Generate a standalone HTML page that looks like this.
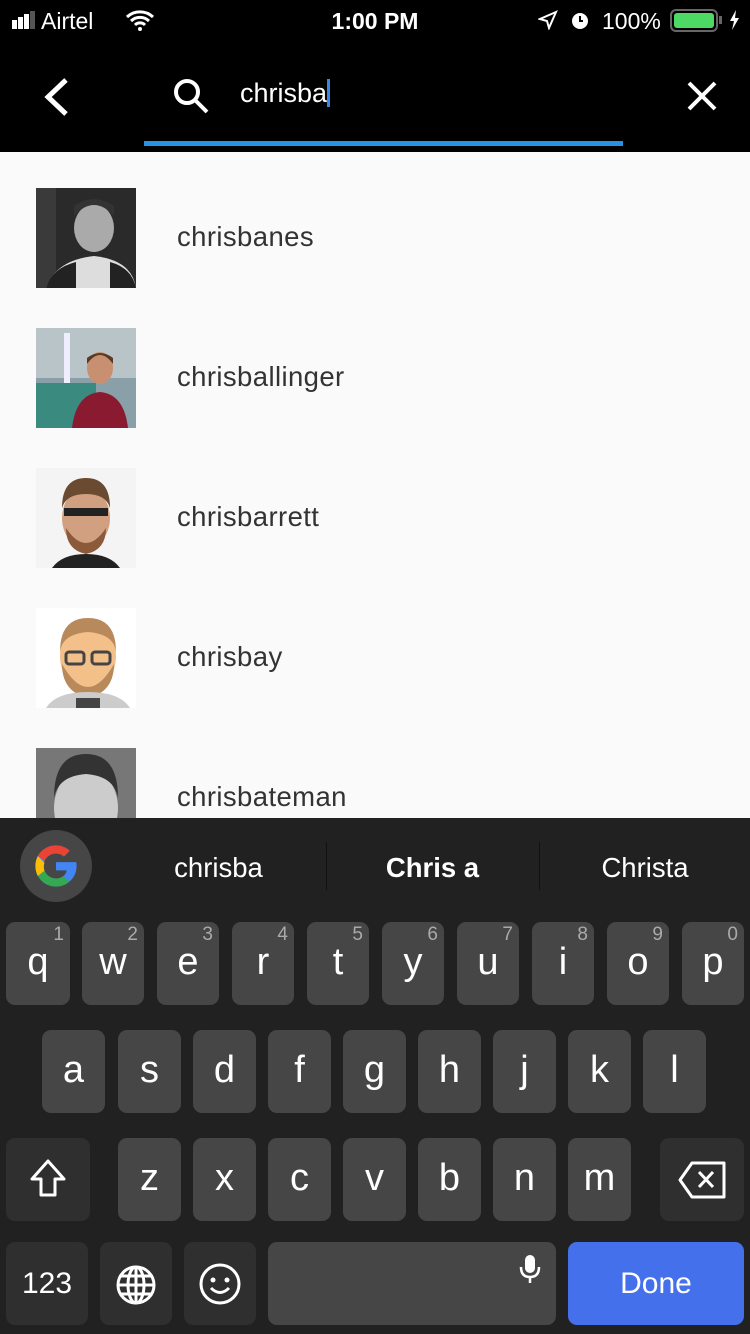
<!DOCTYPE html><html><head><meta charset="utf-8"><style>
*{margin:0;padding:0;box-sizing:border-box}
body{width:750px;height:1334px;overflow:hidden;background:#fafafa;font-family:"Liberation Sans",sans-serif;position:relative}
.abs{position:absolute}
.k{position:absolute;background:#464646;border-radius:9px;color:#fff;font-size:38px;text-align:center;line-height:80px;height:83px}
.k sup{position:absolute;right:6px;top:2px;font-size:19px;color:#aaa;line-height:22px}
.d{background:#2f2f2f}
.row{position:absolute;left:0;width:750px;height:140px}
.row svg{position:absolute;left:36px;top:36px}
.row span{position:absolute;left:177px;top:69px;font-size:27.5px;color:#333;letter-spacing:.4px}
</style></head><body>
<div class="abs" style="left:0;top:0;width:750px;height:152px;background:#000"></div>
<div class="abs" style="left:12px;top:4px;color:#fff;font-size:23px;line-height:34px">
<span style="display:inline-block;width:5px;height:9px;background:#fff;margin-right:1px"></span><span style="display:inline-block;width:5px;height:12px;background:#fff;margin-right:1px"></span><span style="display:inline-block;width:5px;height:15px;background:#fff;margin-right:1px"></span><span style="display:inline-block;width:5px;height:18px;background:#555;margin-right:6px"></span>Airtel</div>
<svg class="abs" style="left:125px;top:9px" width="30" height="22" viewBox="0 0 30 22"><path d="M2 8a19 19 0 0 1 26 0M6 12a13 13 0 0 1 18 0M10 16a7 7 0 0 1 10 0" stroke="#fff" stroke-width="3" fill="none"/><circle cx="15" cy="20" r="2" fill="#fff"/></svg>
<div class="abs" style="left:0;width:750px;top:4px;text-align:center;color:#fff;font-size:23px;font-weight:bold;line-height:34px">1:00 PM</div>
<svg class="abs" style="left:538px;top:10px" width="20" height="20"><path d="M18 2L2 9l7 2 2 7z" stroke="#fff" stroke-width="2" fill="none"/></svg>
<svg class="abs" style="left:569px;top:9px" width="22" height="22"><circle cx="11" cy="12" r="8" fill="#fff"/><path d="M11 7v5h3" stroke="#000" stroke-width="2" fill="none"/></svg>
<div class="abs" style="left:602px;top:4px;color:#fff;font-size:23px;line-height:34px">100%</div>
<div class="abs" style="left:670px;top:9px;width:48px;height:23px;border:2px solid #666;border-radius:6px;padding:2px"><div style="width:100%;height:100%;background:#4cd964;border-radius:3px"></div></div>
<div class="abs" style="left:719px;top:16px;width:3px;height:8px;background:#666"></div>
<svg class="abs" style="left:728px;top:9px" width="12" height="22"><path d="M8 1L2 12h4l-2 9 7-12H7z" fill="#fff"/></svg>
<svg class="abs" style="left:40px;top:76px" width="32" height="42"><path d="M26 4L8 21l18 17" stroke="#fff" stroke-width="5" fill="none"/></svg>
<svg class="abs" style="left:170px;top:76px" width="42" height="40"><circle cx="17" cy="16" r="11" stroke="#fff" stroke-width="4" fill="none"/><path d="M25 24l12 12" stroke="#fff" stroke-width="4"/></svg>
<div class="abs" style="left:240px;top:76px;color:#fff;font-size:27px;line-height:34px">chrisba<span style="display:inline-block;width:3px;height:28px;background:#3a86e8;vertical-align:-5px"></span></div>
<svg class="abs" style="left:686px;top:80px" width="32" height="32"><path d="M3 3l26 26M29 3L3 29" stroke="#fff" stroke-width="4"/></svg>
<div class="abs" style="left:144px;top:141px;width:479px;height:5px;background:#2592e8"></div>

<div class="row" style="top:152px"><svg width="100" height="100"><rect width="100" height="100" fill="#2a2a2a"/><rect x="0" width="20" height="100" fill="#3a3a3a"/><ellipse cx="58" cy="40" rx="20" ry="24" fill="#aaa"/><path d="M38 28q20-22 40 0v-10q-20-14-40 0z" fill="#333"/><path d="M10 100q10-28 48-32q38 4 42 32z" fill="#ddd"/><path d="M10 100q6-20 30-26v26zM100 100q-4-20-26-26v26z" fill="#222"/></svg><span>chrisbanes</span></div>
<div class="row" style="top:292px"><svg width="100" height="100"><rect width="100" height="100" fill="#8aa0a8"/><rect x="0" y="0" width="100" height="50" fill="#b8c4c8"/><rect x="28" y="5" width="6" height="50" fill="#eef"/><rect x="0" y="55" width="60" height="45" fill="#3a8a80"/><ellipse cx="64" cy="40" rx="13" ry="16" fill="#c89070"/><path d="M51 36q13-18 26 0v-6q-13-10-26 0z" fill="#5a3a20"/><path d="M36 100q4-34 28-36q24 2 28 36z" fill="#8a1a30"/></svg><span>chrisballinger</span></div>
<div class="row" style="top:432px"><svg width="100" height="100"><rect width="100" height="100" fill="#f4f4f4"/><ellipse cx="50" cy="50" rx="24" ry="30" fill="#d0a080"/><path d="M26 40q0-30 24-30q24 0 24 30q-4-14-24-14q-20 0-24 14z" fill="#6a4a30"/><path d="M30 60q20 30 40 0q0 22-20 26q-20-4-20-26z" fill="#8a5a3a"/><rect x="28" y="40" width="44" height="8" fill="#222"/><path d="M16 100q10-14 34-14q24 0 34 14z" fill="#222"/></svg><span>chrisbarrett</span></div>
<div class="row" style="top:572px"><svg width="100" height="100"><rect width="100" height="100" fill="#fff"/><ellipse cx="52" cy="48" rx="28" ry="36" fill="#f3c08a"/><path d="M24 44q0-34 28-34q28 0 28 34q-2-18-28-20q-26 2-28 20z" fill="#b8895a"/><path d="M26 56q26 46 52 0q0 28-26 34q-26-6-26-34z" fill="#b8895a"/><rect x="30" y="44" width="18" height="12" rx="3" fill="none" stroke="#444" stroke-width="3"/><rect x="56" y="44" width="18" height="12" rx="3" fill="none" stroke="#444" stroke-width="3"/><path d="M10 100q10-16 42-16q32 0 42 16z" fill="#ccc"/><rect x="40" y="90" width="24" height="10" fill="#444"/></svg><span>chrisbay</span></div>
<div class="row" style="top:712px"><svg width="100" height="70"><rect width="100" height="70" fill="#777"/><ellipse cx="50" cy="60" rx="32" ry="40" fill="#ccc"/><path d="M18 50q0-44 32-44q32 0 32 44q-4-22-32-24q-28 2-32 24z" fill="#333"/></svg><span>chrisbateman</span></div>

<div class="abs" style="left:0;top:818px;width:750px;height:516px;background:#212121"></div>
<div class="abs" style="left:20px;top:830px;width:72px;height:72px;border-radius:50%;background:#464646"></div>
<svg class="abs" style="left:33px;top:843px" width="46" height="46" viewBox="0 0 48 48"><path d="M43.6 20H24v8.5h11.2C34 34 29.6 37 24 37c-7.2 0-13-5.8-13-13s5.8-13 13-13c3.2 0 6 1.1 8.300 3.1l6-6C34.6 4.7 29.6 2.5 24 2.5 12.1 2.5 2.5 12.1 2.5 24S12.1 45.5 24 45.5 45.5 35.9 45.5 24c0-1.4-.1-2.700-.4-4z" fill="#4285f4"/><path d="M5 13.5l7 5.1C13.8 14.2 18.5 11 24 11c3.2 0 6 1.1 8.3 3.1l6-6C34.6 4.7 29.6 2.5 24 2.5c-8.3 0-15.4 4.7-19 11z" fill="#ea4335"/><path d="M24 45.5c5.5 0 10.4-2.1 14.1-5.5l-6.6-5.5C29.5 36.1 26.9 37 24 37c-5.6 0-10.3-3.6-12-8.6l-7 5.4C8.5 40.8 15.7 45.5 24 45.5z" fill="#34a853"/><path d="M5 13.5C3.4 16.6 2.5 20.2 2.5 24s.9 7.3 2.5 10.4l7-5.4c-.4-1.3-.7-2.7-.7-4.1s.3-2.9.7-4.2z" fill="#fbbc05"/></svg>
<div class="abs" style="left:112px;top:847px;width:213px;text-align:center;color:#fff;font-size:27.5px;line-height:42px">chrisba</div>
<div class="abs" style="left:326px;top:842px;width:1px;height:48px;background:#111"></div>
<div class="abs" style="left:326px;top:847px;width:213px;text-align:center;color:#fff;font-size:27.5px;font-weight:bold;line-height:42px">Chris a</div>
<div class="abs" style="left:539px;top:842px;width:1px;height:48px;background:#111"></div>
<div class="abs" style="left:540px;top:847px;width:210px;text-align:center;color:#fff;font-size:27.5px;line-height:42px">Christa</div>

<div class="k" style="left:6px;top:922px;width:64px">q<sup>1</sup></div>
<div class="k" style="left:82px;top:922px;width:62px">w<sup>2</sup></div>
<div class="k" style="left:157px;top:922px;width:62px">e<sup>3</sup></div>
<div class="k" style="left:232px;top:922px;width:62px">r<sup>4</sup></div>
<div class="k" style="left:307px;top:922px;width:62px">t<sup>5</sup></div>
<div class="k" style="left:382px;top:922px;width:62px">y<sup>6</sup></div>
<div class="k" style="left:457px;top:922px;width:62px">u<sup>7</sup></div>
<div class="k" style="left:532px;top:922px;width:62px">i<sup>8</sup></div>
<div class="k" style="left:607px;top:922px;width:62px">o<sup>9</sup></div>
<div class="k" style="left:682px;top:922px;width:62px">p<sup>0</sup></div>

<div class="k" style="left:42px;top:1030px;width:63px">a</div>
<div class="k" style="left:118px;top:1030px;width:63px">s</div>
<div class="k" style="left:193px;top:1030px;width:63px">d</div>
<div class="k" style="left:268px;top:1030px;width:63px">f</div>
<div class="k" style="left:343px;top:1030px;width:63px">g</div>
<div class="k" style="left:418px;top:1030px;width:63px">h</div>
<div class="k" style="left:493px;top:1030px;width:63px">j</div>
<div class="k" style="left:568px;top:1030px;width:63px">k</div>
<div class="k" style="left:643px;top:1030px;width:63px">l</div>

<div class="k d" style="left:6px;top:1138px;width:84px"><svg style="margin-top:20px" width="40" height="42"><path d="M20 3L4 21h9v16h14V21h9z" stroke="#fff" stroke-width="3" fill="none" stroke-linejoin="round"/></svg></div>
<div class="k" style="left:118px;top:1138px;width:63px">z</div>
<div class="k" style="left:193px;top:1138px;width:63px">x</div>
<div class="k" style="left:268px;top:1138px;width:63px">c</div>
<div class="k" style="left:343px;top:1138px;width:63px">v</div>
<div class="k" style="left:418px;top:1138px;width:63px">b</div>
<div class="k" style="left:493px;top:1138px;width:63px">n</div>
<div class="k" style="left:568px;top:1138px;width:63px">m</div>
<div class="k d" style="left:660px;top:1138px;width:84px"><svg style="margin-top:22px" width="52" height="40"><path d="M16 3h32v34H16L4 20z" stroke="#fff" stroke-width="3" fill="none" stroke-linejoin="round"/><path d="M23 12l14 15M37 12L23 27" stroke="#fff" stroke-width="3"/></svg></div>

<div class="k d" style="left:6px;top:1242px;width:82px;font-size:30px;line-height:84px">123</div>
<div class="k d" style="left:100px;top:1242px;width:72px"><svg style="margin-top:22px" width="42" height="42"><circle cx="21" cy="21" r="18" stroke="#fff" stroke-width="3" fill="none"/><ellipse cx="21" cy="21" rx="8" ry="18" stroke="#fff" stroke-width="3" fill="none"/><path d="M3 21h36M6 12h30M6 30h30M21 3v36" stroke="#fff" stroke-width="3"/></svg></div>
<div class="k d" style="left:184px;top:1242px;width:72px"><svg style="margin-top:20px" width="44" height="44"><circle cx="22" cy="22" r="19" stroke="#fff" stroke-width="3" fill="none"/><circle cx="15" cy="18" r="2.5" fill="#fff"/><circle cx="29" cy="18" r="2.5" fill="#fff"/><path d="M13 26q9 9 18 0" stroke="#fff" stroke-width="3" fill="none"/></svg></div>
<div class="k" style="left:268px;top:1242px;width:288px"><svg class="abs" style="left:250px;top:12px" width="24" height="30"><rect x="7" y="1" width="10" height="18" rx="5" fill="#fff"/><path d="M3 13q0 10 9 10q9 0 9-10M12 23v6" stroke="#fff" stroke-width="2.5" fill="none"/></svg></div>
<div class="k" style="left:568px;top:1242px;width:176px;background:#4570ec;font-size:30px;line-height:84px">Done</div>
</body></html>
